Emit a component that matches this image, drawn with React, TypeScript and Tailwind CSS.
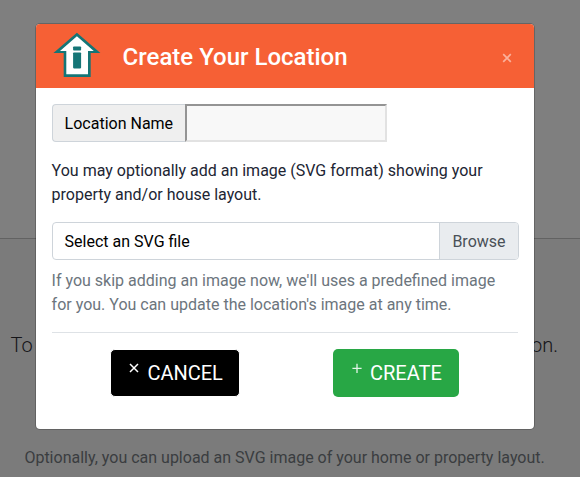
import React from 'react';

function HouseLogo() {
  return (
    <svg width="48" height="46" viewBox="-1 0 48 46" aria-hidden="true">
      <path d="M22.9 0.8 L46.4 21 H36.7 V44.9 H9.7 V21 H-0.6 Z" fill="#157576" />
      <path d="M22.9 4.3 L39.8 18.9 H34 V42.3 H12.3 V18.9 H6 Z" fill="#fff" />
      <rect x="19.1" y="14.4" width="8" height="4.2" rx="0.8" fill="#157576" />
      <rect x="19.1" y="20.4" width="8" height="16" rx="0.8" fill="#157576" />
    </svg>
  );
}

function Backdrop() {
  return (
    <div className="flex h-[477px] flex-col bg-[#7b7b7b]">
      <div className="h-[239px] shrink-0 border-b border-[#626262] bg-[#7f7f7f]" />
      <div className="mt-[91px] flex h-[30px] items-center justify-between pl-[10.5px] pr-[22px] text-[20px] font-light text-[#151519]">
        <span>To</span>
        <span>on.</span>
      </div>
      <p className="mt-[86px] pl-[24.4px] text-base leading-6 whitespace-nowrap text-[#3a3d40]">
        Optionally, you can upload an SVG image of your home or property layout.
      </p>
    </div>
  );
}

export default function App() {
  return (
    <div className="relative h-[477px] w-[580px] overflow-hidden font-[Roboto,sans-serif]">
      <Backdrop />
      <div className="absolute inset-0 pt-[23px] pl-[35px]">
        <div className="h-[407px] w-[500px] overflow-hidden rounded-[5px] border border-black/20 bg-white bg-clip-padding">
          <header className="flex h-16 items-center bg-[#f66035]">
            <div className="ml-[17px] h-[46px] w-[48px] -translate-y-px">
              <HouseLogo />
            </div>
            <h1 className="ml-[21.6px] pt-[2px] text-[24px] leading-9 font-medium text-white">Create Your Location</h1>
            <button className="mr-[22px] ml-auto pt-1" aria-label="Close">
              <svg width="10" height="10" viewBox="0 0 10 10" fill="none" stroke="#fbb09b" strokeWidth="1.7">
                <path d="M1.2 1.2 8.8 8.8 M8.8 1.2 1.2 8.8" />
              </svg>
            </button>
          </header>
          <main className="px-4 pt-4 text-base leading-6">
            <div className="flex h-[38px]">
              <label htmlFor="location" className="flex w-[133px] items-center rounded-l border border-r-0 border-[#ced4da] bg-[#efefef] pt-px pl-[11.6px] text-black">
                Location Name
              </label>
              <input id="location" className="w-[202px] border-2 border-t-[#949494] border-r-[#e2e2e2] border-b-[#e2e2e2] border-l-[#949494] bg-[#f8f8f8] px-2 outline-none" />
            </div>
            <p className="-ml-[0.4px] mt-[17px] text-[#212533]">
              You may optionally add an image (SVG format) showing your
              <br />
              property and/or house layout.
            </p>
            <div className="mt-[15px] flex h-[38px] w-[467px] overflow-hidden rounded border border-[#ced4da]">
              <span className="flex flex-1 items-center pt-[2px] pl-[11.6px] text-black">Select an SVG file</span>
              <span className="flex w-[79px] items-center border-l border-[#ced4da] bg-[#e9ecef] pt-[2px] pl-[12.4px] text-[#495057]">Browse</span>
            </div>
            <p className="-ml-[0.4px] mt-[9px] text-[#6c757d]">
              If you skip adding an image now, we'll uses a predefined image
              <br />
              for you. You can update the location's image at any time.
            </p>
            <div className="mt-[15px] flex border-t border-[#dee2e6] pt-4 pl-[58px] text-[20px] leading-[30px] text-white">
              <button className="flex h-12 w-[130px] items-center rounded-[5px] border border-white bg-black pl-[18px]">
                <svg width="10" height="10" viewBox="0 0 10 10" fill="none" stroke="white" strokeWidth="1.5" className="-translate-y-[5px]">
                  <path d="M1 1 9 9 M9 1 1 9" />
                </svg>
                <span className="ml-[8.4px]">CANCEL</span>
              </button>
              <button className="ml-[93px] flex h-12 w-[126px] items-center rounded-[5px] bg-[#28a745] pl-[19px]">
                <svg width="10" height="10" viewBox="0 0 10 10" fill="none" stroke="#e4f4e8" strokeWidth="1.3" className="-translate-y-[5px]">
                  <path d="M0.4 5.4 H9.6 M5 0.8 V10" />
                </svg>
                <span className="ml-[8px]">CREATE</span>
              </button>
            </div>
          </main>
        </div>
      </div>
    </div>
  );
}
